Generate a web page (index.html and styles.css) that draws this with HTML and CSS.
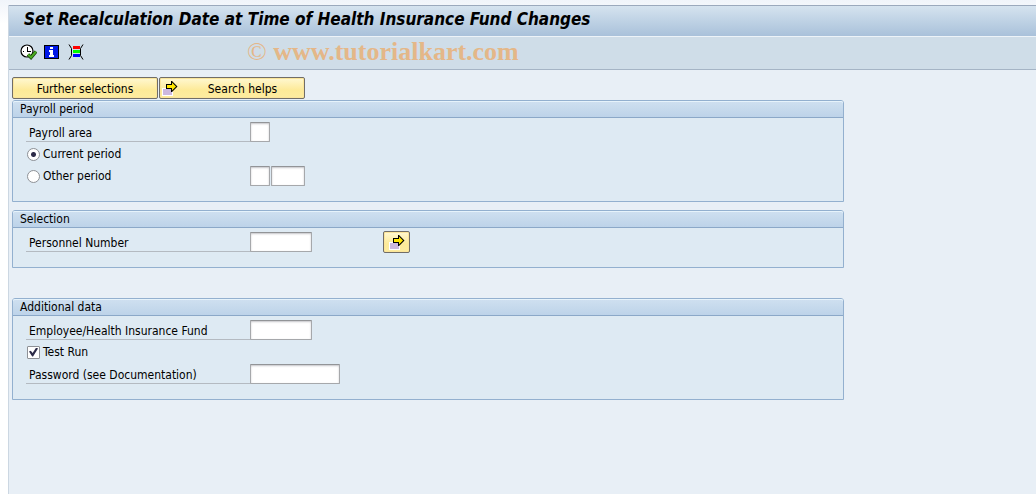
FILE: index.html
```
<!DOCTYPE html>
<html lang="en">
<head>
<meta charset="utf-8">
<title>Set Recalculation Date at Time of Health Insurance Fund Changes</title>
<link rel="stylesheet" href="styles.css">
</head>
<body>
<svg class="defs" width="0" height="0">
  <symbol id="arrow-icon" viewBox="0 0 16 16">
    <rect x="0" y="7" width="11" height="8" fill="#fff"/>
    <rect x="1" y="8" width="9" height="6" fill="#ccb8de"/>
    <path d="M4 3h5V0h1l5.500 5.500L10 11H9V8H4z" fill="#000"/>
    <path d="M5 4h5V1.500l4 4-4 4V7H5z" fill="#ffe600"/>
  </symbol>
</svg>

<div class="window">
  <header>
    <h1>Set Recalculation Date at Time of Health Insurance Fund Changes</h1>
    <div class="toolbar">
      <button type="button" class="tool" aria-label="Execute">
        <svg width="17" height="16" viewBox="0 0 17 16">
          <circle cx="7" cy="7" r="6" fill="#fff" stroke="#000" stroke-width="1.200"/>
          <path d="M7.500 3v5M7 7.500h4M3 7.500h1M7.500 11v1" fill="none" stroke="#000"/>
          <path d="M8 10.500l3 3 5-6" fill="none" stroke="#143c08" stroke-width="3.400"/>
          <path d="M8 10.500l3 3 5-6" fill="none" stroke="#4cab22" stroke-width="2"/>
        </svg>
      </button>
      <button type="button" class="tool" aria-label="Information">
        <svg width="16" height="16" viewBox="0 0 16 16" shape-rendering="crispEdges">
          <rect x="0" y="1" width="15" height="14" fill="#000"/>
          <rect x="1" y="2" width="13" height="12" fill="#0018e8"/>
          <path d="M6 3h3v2H6zM5 6h4v5h1v2H5v-2h1V8H5z" fill="#fff"/>
        </svg>
      </button>
      <button type="button" class="tool" aria-label="Variants">
        <svg width="16" height="16" viewBox="0 0 16 16">
          <path d="M1 0.500l2.500 4v7l-2.500 4M15 0.500l-2.500 4v7l2.500 4" fill="none" stroke="#000"/>
          <g shape-rendering="crispEdges">
            <rect x="5" y="2" width="7" height="3" fill="#f00"/>
            <rect x="5" y="6" width="7" height="3" fill="#00f800"/>
            <rect x="5" y="10" width="7" height="3" fill="#00f"/>
          </g>
        </svg>
      </button>
      <span class="watermark"><span class="copy">©</span> www.tutorialkart.com</span>
    </div>
  </header>

  <main>
    <div class="buttons">
      <button type="button" class="btn">Further selections</button>
      <button type="button" class="btn btn-icon"><svg width="16" height="16"><use href="#arrow-icon"/></svg><span>Search helps</span></button>
    </div>

    <section class="panel">
      <h2>Payroll period</h2>
      <div class="rows">
        <div class="row">
          <label class="name" for="area">Payroll area</label>
          <input type="text" id="area" class="w-small">
        </div>
        <div class="row">
          <label class="choice"><input type="radio" name="period" checked>Current period</label>
        </div>
        <div class="row">
          <label class="choice"><input type="radio" name="period">Other period</label>
          <input type="text" class="w-small" aria-label="Period number">
          <input type="text" class="w-year" aria-label="Period year">
        </div>
      </div>
    </section>

    <section class="panel">
      <h2>Selection</h2>
      <div class="rows">
        <div class="row">
          <label class="name" for="pernr">Personnel Number</label>
          <input type="text" id="pernr" class="w-medium">
          <button type="button" class="btn btn-more" aria-label="Multiple selection"><svg width="16" height="16"><use href="#arrow-icon"/></svg></button>
        </div>
      </div>
    </section>

    <section class="panel additional">
      <h2>Additional data</h2>
      <div class="rows">
        <div class="row">
          <label class="name" for="fund">Employee/Health Insurance Fund</label>
          <input type="text" id="fund" class="w-medium">
        </div>
        <div class="row">
          <label class="choice"><input type="checkbox" checked>Test Run</label>
        </div>
        <div class="row">
          <label class="name" for="password">Password (see Documentation)</label>
          <input type="password" id="password" class="w-large">
        </div>
      </div>
    </section>
  </main>
</div>
</body>
</html>
```
FILE: styles.css
```
* {
  box-sizing: border-box;
}
body {
  margin: 0;
  padding: 5px 0 0 8px;
  min-height: 100vh;
  display: flex;
  background: linear-gradient(#f0f4fa, #fff 24px);
  color: #000;
  font-family: Tahoma, "DejaVu Sans Condensed", "DejaVu Sans", sans-serif;
  font-size: 12px;
}
button, input {
  font: inherit;
  color: inherit;
  margin: 0;
}
.defs {
  position: absolute;
}
.window {
  flex: 1;
  border-left: 1px solid #ccd7e2;
  background: #e8eff6;
}

/* title and toolbar */
header {
  border-top: 1px solid #9ba9bd;
  border-bottom: 1px solid #a5b4c5;
}
h1 {
  margin: 0;
  padding-left: 15px;
  height: 31px;
  line-height: 27px;
  font-size: 17px;
  font-style: italic;
  white-space: nowrap;
  background: linear-gradient(#d5e3ef, #a9c1da);
  border-bottom: 1px solid #edf3f8;
}
.toolbar {
  display: flex;
  align-items: center;
  gap: 8px;
  height: 32px;
  padding-left: 11px;
  background: #cfdde8;
}
.tool {
  display: flex;
  width: 16px;
  padding: 0 0 2px;
  border: none;
  background: none;
}
.tool svg {
  flex: none;
}
.watermark {
  margin-left: 155px;
  color: #e4b788;
  font-family: "Liberation Serif", serif;
  font-size: 26px;
  font-weight: bold;
  line-height: 28px;
  padding-bottom: 2px;
  white-space: nowrap;
}
.copy {
  font-weight: normal;
}

main {
  padding: 7px 3px;
}
.buttons {
  display: flex;
  gap: 1px;
  margin-bottom: 1px;
}
.btn {
  display: flex;
  align-items: center;
  justify-content: center;
  width: 146px;
  height: 22px;
  padding: 1px 2px 0;
  border: 1px solid #706d68;
  border-radius: 2px;
  background: linear-gradient(#fff8d2, #fdea98 60%, #fdeca0);
  box-shadow: inset 0 0 0 1px #fbe59a;
}
.btn svg {
  flex: none;
}
.btn-icon span {
  flex: 1;
  padding-left: 5px;
}

/* panels */
.panel {
  max-width: 832px;
  margin-bottom: 8px;
  border: 1px solid #93b0cf;
  border-radius: 3px 3px 0 0;
  background: #deeaf3;
}
.additional {
  margin-top: 30px;
}
h2 {
  margin: 0;
  padding-left: 7px;
  height: 17px;
  line-height: 17px;
  font-size: 12px;
  font-weight: normal;
  background: linear-gradient(#cfe0f0, #bdd3e9);
  border-bottom: 1px solid #8ba8c8;
  border-radius: 2px 2px 0 0;
  box-shadow: inset 0 1px #e6f3fb;
}
.rows {
  padding: 3px 13px 14px;
}
.row {
  display: flex;
  align-items: center;
  gap: 1px;
  height: 22px;
}
.name {
  width: 224px;
  height: 20px;
  margin-right: -1px;
  padding-left: 3px;
  line-height: 22px;
  border-bottom: 1px solid #b4bac1;
}
.choice {
  display: flex;
  align-items: center;
  gap: 3px;
  width: 223px;
  padding-left: 1px;
  line-height: 17px;
}
input[type="text"], input[type="password"] {
  height: 20px;
  padding: 0 3px;
  border: 1px solid #a6a8ab;
  border-top-color: #929497;
  border-radius: 1px;
  background: #fff;
  box-shadow: inset 0 1px 2px #c4c4c8;
}
input.w-small { width: 20px; }
input.w-year { width: 34px; }
input.w-medium { width: 62px; }
input.w-large { width: 90px; }
.btn-more {
  width: 27px;
  margin-left: 70px;
}

input[type="radio"], input[type="checkbox"] {
  appearance: none;
  width: 13px;
  height: 13px;
  border: 1px solid #8e9196;
  background: #fff;
}
input[type="radio"] {
  border-radius: 50%;
}
input[type="radio"]:checked {
  background: radial-gradient(circle, #2c2b48 2px, #fff 3px);
}
input[type="checkbox"] {
  display: grid;
  place-items: center;
  border-radius: 1px;
}
input[type="checkbox"]:checked::before {
  content: "";
  width: 9px;
  height: 9px;
  background: #2c2b48;
  clip-path: polygon(0 45%, 20% 35%, 40% 62%, 80% 0, 100% 10%, 45% 100%, 35% 100%);
}
```
